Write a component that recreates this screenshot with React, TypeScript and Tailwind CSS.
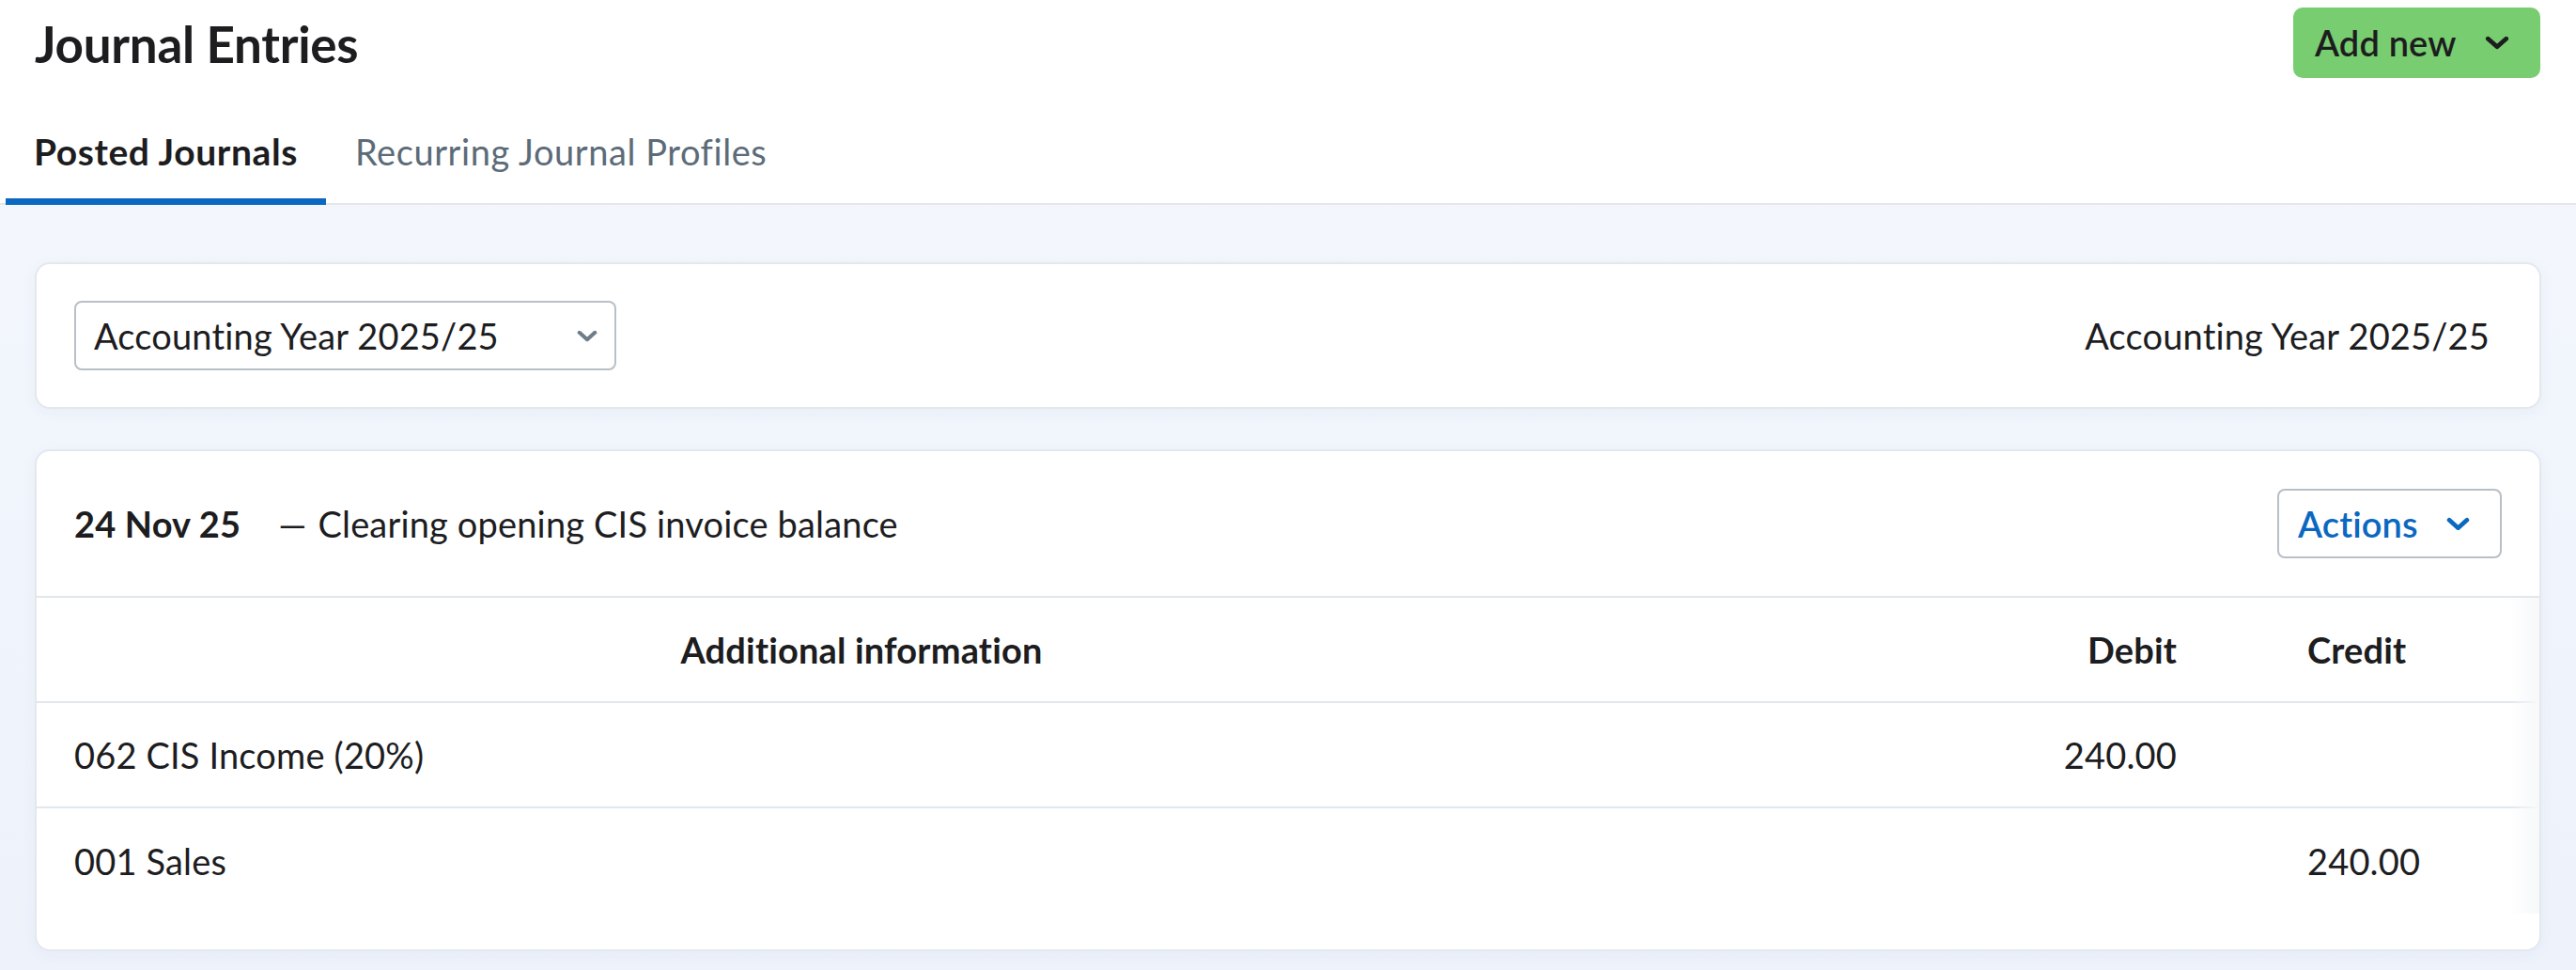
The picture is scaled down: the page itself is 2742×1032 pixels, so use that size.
import { useState } from "react";

type Line = { account: string; debit?: string; credit?: string };

const lines: Line[] = [
  { account: "062 CIS Income (20%)", debit: "240.00" },
  { account: "001 Sales", credit: "240.00" },
];

function Chevron({ className }: { className?: string }) {
  return (
    <svg viewBox="0 0 24 14" fill="none" className={className}>
      <path
        d="M3 3l9 8 9-8"
        stroke="currentColor"
        strokeWidth="4.5"
        strokeLinecap="round"
        strokeLinejoin="round"
      />
    </svg>
  );
}

export default function App() {
  const [tab, setTab] = useState("posted");

  const tabs = [
    { id: "posted", label: "Posted Journals" },
    { id: "recurring", label: "Recurring Journal Profiles" },
  ];

  return (
    <div className="min-h-screen w-full bg-gradient-to-b from-[#f4f7fd] to-[#edf2fb] font-['Lato',sans-serif] tracking-[0.01em] text-[#1d1d1f]">
      <header className="bg-white">
        <div className="flex items-start justify-between pl-[37px] pr-[38px] pt-[8px]">
          <h1 className="mt-[9px] text-[53px] font-bold leading-[60px] tracking-[-0.3px]">
            Journal Entries
          </h1>
          <button className="flex h-[75px] w-[263px] items-center rounded-[10px] bg-[#78cd70] pl-[23px] text-[38px] font-semibold text-[#1d1d1f]">
            Add new
            <Chevron className="ml-[30px] h-[15px] w-[26px]" />
          </button>
        </div>
        <nav className="mt-[56px] flex border-b-2 border-[#e2e7ec] pl-[6px]">
          {tabs.map((t) => (
            <button
              key={t.id}
              onClick={() => setTab(t.id)}
              className={
                tab === t.id
                  ? "-mb-[2px] border-b-[7px] border-[#0b68c0] px-[30px] pb-[27px] text-[39px] font-bold leading-[45px] tracking-[0.015em] text-[#1d1d1f]"
                  : "-mb-[2px] border-b-[7px] border-transparent px-[31px] pb-[27px] text-[38px] leading-[45px] tracking-[0.015em] text-[#5c6b78]"
              }
            >
              {t.label}
            </button>
          ))}
        </nav>
      </header>

      <main className="flex flex-col gap-[43px] px-[37px] pt-[61px] pb-[22px]">
        <section className="flex h-[156px] items-center justify-between rounded-[16px] border-2 border-[#e4e8ed] bg-white pl-[40px] pr-[53px] shadow-[0_4px_16px_rgba(40,70,120,0.04)]">
          <div className="flex h-[74px] w-[577px] items-center justify-between rounded-[8px] border-2 border-[#b8bfc6] pl-[19px] pr-[18px] text-[38px]">
            <span>Accounting Year 2025/25</span>
            <Chevron className="h-[13px] w-[22px] text-[#6e7d8a]" />
          </div>
          <span className="text-[38px]">Accounting Year 2025/25</span>
        </section>

        <section className="overflow-hidden rounded-[16px] border-2 border-[#e4e8ed] bg-white pb-[38px] shadow-[0_4px_16px_rgba(40,70,120,0.04)]">
          <div className="flex h-[156px] items-center justify-between border-b-2 border-[#e2e7ec] pl-[40px] pr-[40px]">
            <div className="flex items-baseline text-[38px]">
              <span className="mr-[40px] font-bold">24 Nov 25</span>
              <span>—</span>
              <span className="ml-[12px]">Clearing opening CIS invoice balance</span>
            </div>
            <button className="flex h-[74px] w-[239px] items-center rounded-[8px] border-2 border-[#b8bfc6] pl-[20px] text-[38px] font-semibold text-[#0b68c0]">
              Actions
              <Chevron className="ml-[30px] h-[15px] w-[25px]" />
            </button>
          </div>

          <div className="relative">
            <div className="grid grid-cols-[1fr_522px_386px]">
              <div className="flex h-[112px] items-center justify-center border-b-2 border-[#e2e7ec] px-[42px] text-[38px] font-bold">
                Additional information
              </div>
              <div className="flex h-[112px] items-center justify-end border-b-2 border-[#e2e7ec] text-[38px] font-bold">
                Debit
              </div>
              <div className="flex h-[112px] items-center border-b-2 border-[#e2e7ec] pl-[139px] text-[38px] font-bold">
                Credit
              </div>

              {lines.map((l, i) => {
                const rowBorder =
                  i < lines.length - 1 ? "border-b-2 border-[#e2e7ec]" : "";
                return [
                  <div
                    key={`a${i}`}
                    className={`flex h-[112px] items-center px-[40px] text-[38px] ${rowBorder}`}
                  >
                    {l.account}
                  </div>,
                  <div
                    key={`d${i}`}
                    className={`flex h-[112px] items-center justify-end text-[38px] ${rowBorder}`}
                  >
                    {l.debit}
                  </div>,
                  <div
                    key={`c${i}`}
                    className={`flex h-[112px] items-center pl-[139px] text-[38px] ${rowBorder}`}
                  >
                    {l.credit}
                  </div>,
                ];
              })}
            </div>
            {/* scroll hint on the table's right edge */}
            <div className="pointer-events-none absolute inset-y-0 right-0 w-[32px] bg-gradient-to-l from-[#f6f8fa] to-transparent" />
          </div>
        </section>
      </main>
    </div>
  );
}
